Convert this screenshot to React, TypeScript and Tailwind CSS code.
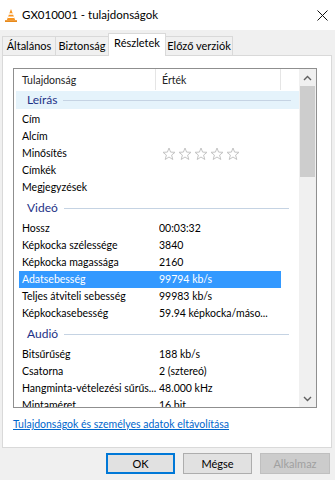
import React from "react";

type Row =
  | { kind: "group"; label: string; band?: boolean }
  | { kind: "item"; name: string; value?: string; stars?: boolean; selected?: boolean };

const rows: Row[] = [
  { kind: "group", label: "Leírás", band: true },
  { kind: "item", name: "Cím" },
  { kind: "item", name: "Alcím" },
  { kind: "item", name: "Minősítés", stars: true },
  { kind: "item", name: "Címkék" },
  { kind: "item", name: "Megjegyzések" },
  { kind: "group", label: "Videó" },
  { kind: "item", name: "Hossz", value: "00:03:32" },
  { kind: "item", name: "Képkocka szélessége", value: "3840" },
  { kind: "item", name: "Képkocka magassága", value: "2160" },
  { kind: "item", name: "Adatsebesség", value: "99794 kb/s", selected: true },
  { kind: "item", name: "Teljes átviteli sebesség", value: "99983 kb/s" },
  { kind: "item", name: "Képkockasebesség", value: "59.94 képkocka/máso..." },
  { kind: "group", label: "Audió" },
  { kind: "item", name: "Bitsűrűség", value: "188 kb/s" },
  { kind: "item", name: "Csatorna", value: "2 (sztereó)" },
  { kind: "item", name: "Hangminta-vételezési sűrűs...", value: "48.000 kHz" },
  { kind: "item", name: "Mintaméret", value: "16 bit" },
];

function Star() {
  return (
    <svg width="14" height="14" viewBox="0 0 14 14">
      <path
        d="M7 1 L8.6 5.1 L13 5.3 L9.6 8.1 L10.8 12.5 L7 10 L3.2 12.5 L4.4 8.1 L1 5.3 L5.4 5.1 Z"
        fill="none"
        stroke="#c4c4c4"
        strokeWidth="1"
        strokeLinejoin="round"
      />
    </svg>
  );
}

function VlcIcon() {
  return (
    <svg width="14" height="15" viewBox="0 0 14 15">
      <path d="M1 12.2 L13 12.2 L13 14 L1 14 Z" fill="#e88a1a" />
      <path d="M7 1 L11.2 12.2 L2.8 12.2 Z" fill="#f7931e" />
      <path d="M5.3 5.2 L8.7 5.2 L9.3 6.8 L4.7 6.8 Z" fill="#ffffff" />
      <path d="M4.1 8.6 L9.9 8.6 L10.4 10 L3.6 10 Z" fill="#ffffff" />
    </svg>
  );
}

export default function App() {
  const font = { fontFamily: 'Lato, "Open Sans", sans-serif' };
  return (
    <div
      className="w-[335px] h-[480px] bg-[#f0f0f0] overflow-hidden flex flex-col text-black"
      style={font}
    >
      {/* Title bar */}
      <div className="h-[30px] bg-white flex items-center pl-[4px] pr-[7px] shrink-0">
        <VlcIcon />
        <span className="ml-[4px] text-[11.5px] leading-[16px] text-[#000]">GX010001 - tulajdonságok</span>
        <div className="flex-1" />
        <svg width="11" height="11" viewBox="0 0 11 11">
          <path d="M0.5 0.5 L10.5 10.5 M10.5 0.5 L0.5 10.5" stroke="#111" strokeWidth="1" />
        </svg>
      </div>

      {/* Tabs */}
      <div className="h-[25px] flex items-end pl-[2px] shrink-0 text-[11px] leading-[14px]">
        <div className="h-[19px] w-[54px] flex items-center justify-center bg-[#f0f0f0] border border-[#d9d9d9] border-b-0 -mr-[1px]">
          Általános
        </div>
        <div className="h-[19px] w-[54px] flex items-center justify-center bg-[#f0f0f0] border border-[#d9d9d9] border-b-0 -mr-[1px]">
          Biztonság
        </div>
        <div className="h-[23px] w-[58px] pb-[4px] flex items-center justify-center bg-white border border-[#d9d9d9] border-b-0 relative z-10 -mb-[1px]">
          Részletek
        </div>
        <div className="h-[19px] w-[68px] flex items-center justify-center bg-[#f0f0f0] border border-[#d9d9d9] border-b-0 -ml-[1px]">
          Előző verziók
        </div>
      </div>

      {/* Panel */}
      <div className="ml-[2px] w-[330px] h-[393px] bg-white border border-[#d9d9d9] shrink-0 flex flex-col">
        <div className="ml-[10px] mt-[12px] w-[304px] h-[340px] border border-[#8f8f8f] flex overflow-hidden">
          {/* content */}
          <div className="w-[285px] flex flex-col overflow-hidden">
            {/* header */}
            <div className="h-[21px] flex shrink-0 text-[10.5px] leading-[14px] text-[#222]">
              <div className="w-[142px] pl-[8px] border-r border-[#e5e5e5] flex items-center">Tulajdonság</div>
              <div className="w-[125px] pl-[6px] border-r border-[#e5e5e5] flex items-center">Érték</div>
            </div>
            {rows.map((r, i) =>
              r.kind === "group" ? (
                <div
                  key={i}
                  className={
                    r.band
                      ? "h-[21px] shrink-0 pt-[1px] pb-[2px]"
                      : "h-[24px] shrink-0 flex items-center"
                  }
                >
                  <div
                    className={
                      "h-[18px] w-full flex items-center pl-[11px] pr-[10px] ml-[2px] " +
                      (r.band ? "bg-[#e5f3fb]" : "")
                    }
                  >
                    <span className="text-[12px] leading-[16px] text-[#1e3287]">{r.label}</span>
                    <div className="flex-1 h-px bg-[#c5d3e3] ml-[6px] mt-[1px]" />
                  </div>
                </div>
              ) : (
                <div key={i} className="h-[17px] shrink-0 flex">
                  <div
                    className={
                      "ml-[5px] w-[262px] flex items-center text-[10.5px] leading-[17px] " +
                      (r.selected ? "bg-[#3399ff] text-white" : "")
                    }
                  >
                    <div className="w-[140px] pl-[3px] whitespace-nowrap overflow-hidden">{r.name}</div>
                    <div className="flex-1 whitespace-nowrap overflow-hidden">
                      {r.stars ? (
                        <div className="flex gap-[2px] ml-[3px]">
                          <Star />
                          <Star />
                          <Star />
                          <Star />
                          <Star />
                        </div>
                      ) : (
                        r.value
                      )}
                    </div>
                  </div>
                </div>
              )
            )}
          </div>
          {/* scrollbar */}
          <div className="w-[17px] bg-[#f0f0f0] flex flex-col items-center shrink-0">
            <div className="h-[17px] w-full flex items-center justify-center">
              <svg width="9" height="6" viewBox="0 0 9 6">
                <path d="M1 5 L4.5 1.5 L8 5" fill="none" stroke="#606060" strokeWidth="1.4" />
              </svg>
            </div>
            <div className="w-[15px] h-[91px] bg-[#cdcdcd]" />
            <div className="flex-1" />
            <div className="h-[17px] w-full flex items-center justify-center">
              <svg width="9" height="6" viewBox="0 0 9 6">
                <path d="M1 1 L4.5 4.5 L8 1" fill="none" stroke="#606060" strokeWidth="1.4" />
              </svg>
            </div>
          </div>
        </div>
        <div className="ml-[10px] mt-[9px] text-[10.5px] leading-[14px] text-[#0066cc] underline">
          Tulajdonságok és személyes adatok eltávolítása
        </div>
      </div>

      {/* Buttons */}
      <div className="flex justify-end gap-[8px] pr-[5px] mt-[5px] text-[11px] leading-[14px]">
        <button className="w-[69px] h-[21px] bg-[#e1e1e1] border border-[#0078d7] shadow-[inset_0_0_0_1px_#0078d7]">
          OK
        </button>
        <button className="w-[69px] h-[21px] bg-[#e1e1e1] border border-[#adadad]">Mégse</button>
        <button className="w-[70px] h-[21px] bg-[#cccccc] border border-[#bfbfbf] text-[#a0a0a0]">
          Alkalmaz
        </button>
      </div>
    </div>
  );
}
